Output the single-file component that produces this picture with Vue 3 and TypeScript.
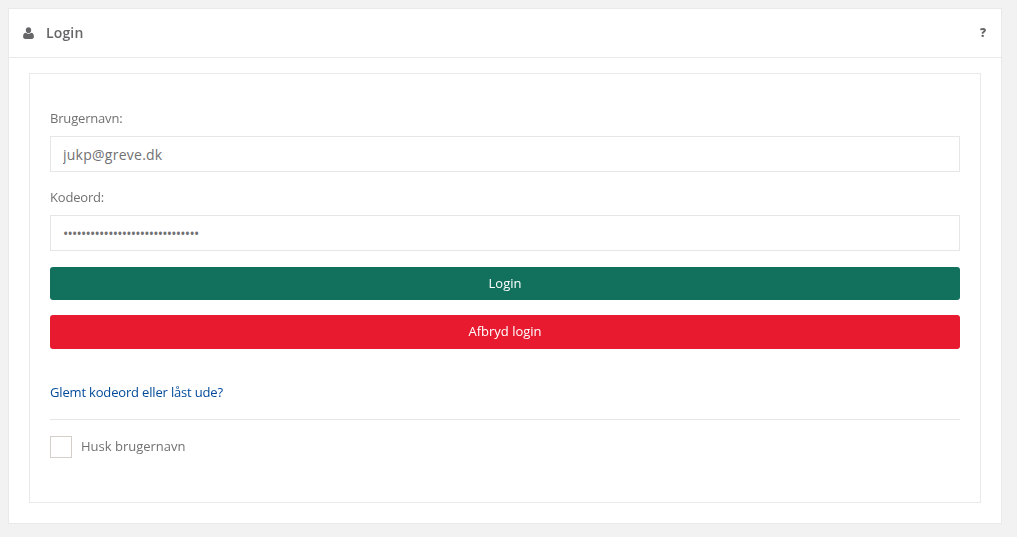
<script setup lang="ts">
const username = 'jukp@greve.dk'
const password = 'x'.repeat(30)
</script>

<template>
  <main class="page">
    <section class="panel">
      <header class="head">
        <svg class="user" viewBox="0 0 11 12" width="11" height="12" aria-hidden="true">
          <path d="M5.5 0.2C7.1 0.2 8.2 1.5 8.2 3.2C8.2 4.8 7 6.2 5.5 6.2C4 6.2 2.8 4.8 2.8 3.2C2.8 1.5 3.9 0.2 5.5 0.2ZM3 5.8C3.6 6.5 4.5 6.9 5.5 6.9C6.5 6.9 7.4 6.5 8 5.8C10 5.9 10.9 7.3 10.9 9.7C10.9 11 10 11.9 8.8 11.9H2.2C1 11.9 0.1 11 0.1 9.7C0.1 7.3 1 5.9 3 5.8Z" fill="#666668"/>
        </svg>
        <h1 class="title gray">Login</h1>
        <span class="help gray">?</span>
      </header>
      <div class="body">
        <form class="box" @submit.prevent>
          <label class="label gray" for="u">Brugernavn:</label>
          <input id="u" class="input gray" type="text" :value="username" />
          <label class="label second gray" for="p">Kodeord:</label>
          <input id="p" class="input pass gray" type="password" :value="password" />
          <button class="btn green" type="button"><span class="gray">Login</span></button>
          <button class="btn red" type="button"><span class="gray">Afbryd login</span></button>
          <a class="link gray" href="#">Glemt kodeord eller låst ude?</a>
          <hr class="rule" />
          <label class="check">
            <span class="tick"></span>
            <span class="gray husk">Husk brugernavn</span>
          </label>
        </form>
      </div>
    </section>
  </main>
</template>

<style>
html, body { margin: 0; background: #f2f2f2; }
</style>

<style scoped>
.page {
  box-sizing: border-box;
  width: 1017px;
  height: 537px;
  padding: 8px 15px 0 8px;
  background: #f2f2f2;
  font-family: "Open Sans", sans-serif;
  color: #717173;
  font-size: 13px;
}
.gray { will-change: opacity; }
.panel {
  box-sizing: border-box;
  height: 516px;
  background: #fff;
  border: 1px solid #e9e9e9;
}
.head {
  box-sizing: border-box;
  height: 49px;
  display: flex;
  align-items: center;
  padding: 0 15px 0 14px;
  border-bottom: 1px solid #e9e9e9;
}
.user { margin-right: 12px; }
.title {
  margin: 0 0 2px;
  font-size: 14px;
  font-weight: 600;
  letter-spacing: 0.15px;
  flex: 1;
  color: #666668;
}
.help {
  margin-bottom: 2px;
  font-size: 12px;
  font-weight: 800;
  color: #666668;
}
.body { padding: 15px 20px 20px; }
.box {
  box-sizing: border-box;
  height: 430px;
  display: flex;
  flex-direction: column;
  padding: 35px 20px 0;
  border: 1px solid #e9e9e9;
}
.label {
  display: block;
  line-height: 18px;
  height: 18px;
  margin-bottom: 9px;
  letter-spacing: -0.18px;
}
.second { margin-top: 16px; margin-bottom: 9px; }
.input {
  box-sizing: border-box;
  width: 100%;
  height: 36px;
  padding: 0 12px;
  border: 1px solid #e6e6e6;
  border-radius: 0;
  outline: none;
  font: 14px "Open Sans", sans-serif;
  letter-spacing: 0.25px;
  color: #717173;
  background: #fff;
}
.pass { letter-spacing: -0.75px; }
.btn {
  display: block;
  width: 100%;
  border: 0;
  border-radius: 3px;
  color: #fff;
  font: 13px/1 "Open Sans", sans-serif;
  padding: 0 0 2px;
}
.btn span { display: inline-block; line-height: 18px; }
.green { height: 33px; margin-top: 16px; background: #11715c; }
.red { height: 34px; margin-top: 15px; background: #e81a30; }
.link {
  margin-top: 34px;
  line-height: 18px;
  letter-spacing: -0.17px;
  color: #004a99;
  text-decoration: none;
}
.rule {
  width: 100%;
  margin: 18px 0 0;
  border: 0;
  border-top: 1px solid #e6e6e6;
}
.check {
  display: flex;
  align-items: center;
  gap: 9px;
  margin-top: 16px;
}
.husk { margin-bottom: 2px; }
.tick {
  box-sizing: border-box;
  width: 22px;
  height: 22px;
  border: 1px solid #d5cfca;
}
</style>
